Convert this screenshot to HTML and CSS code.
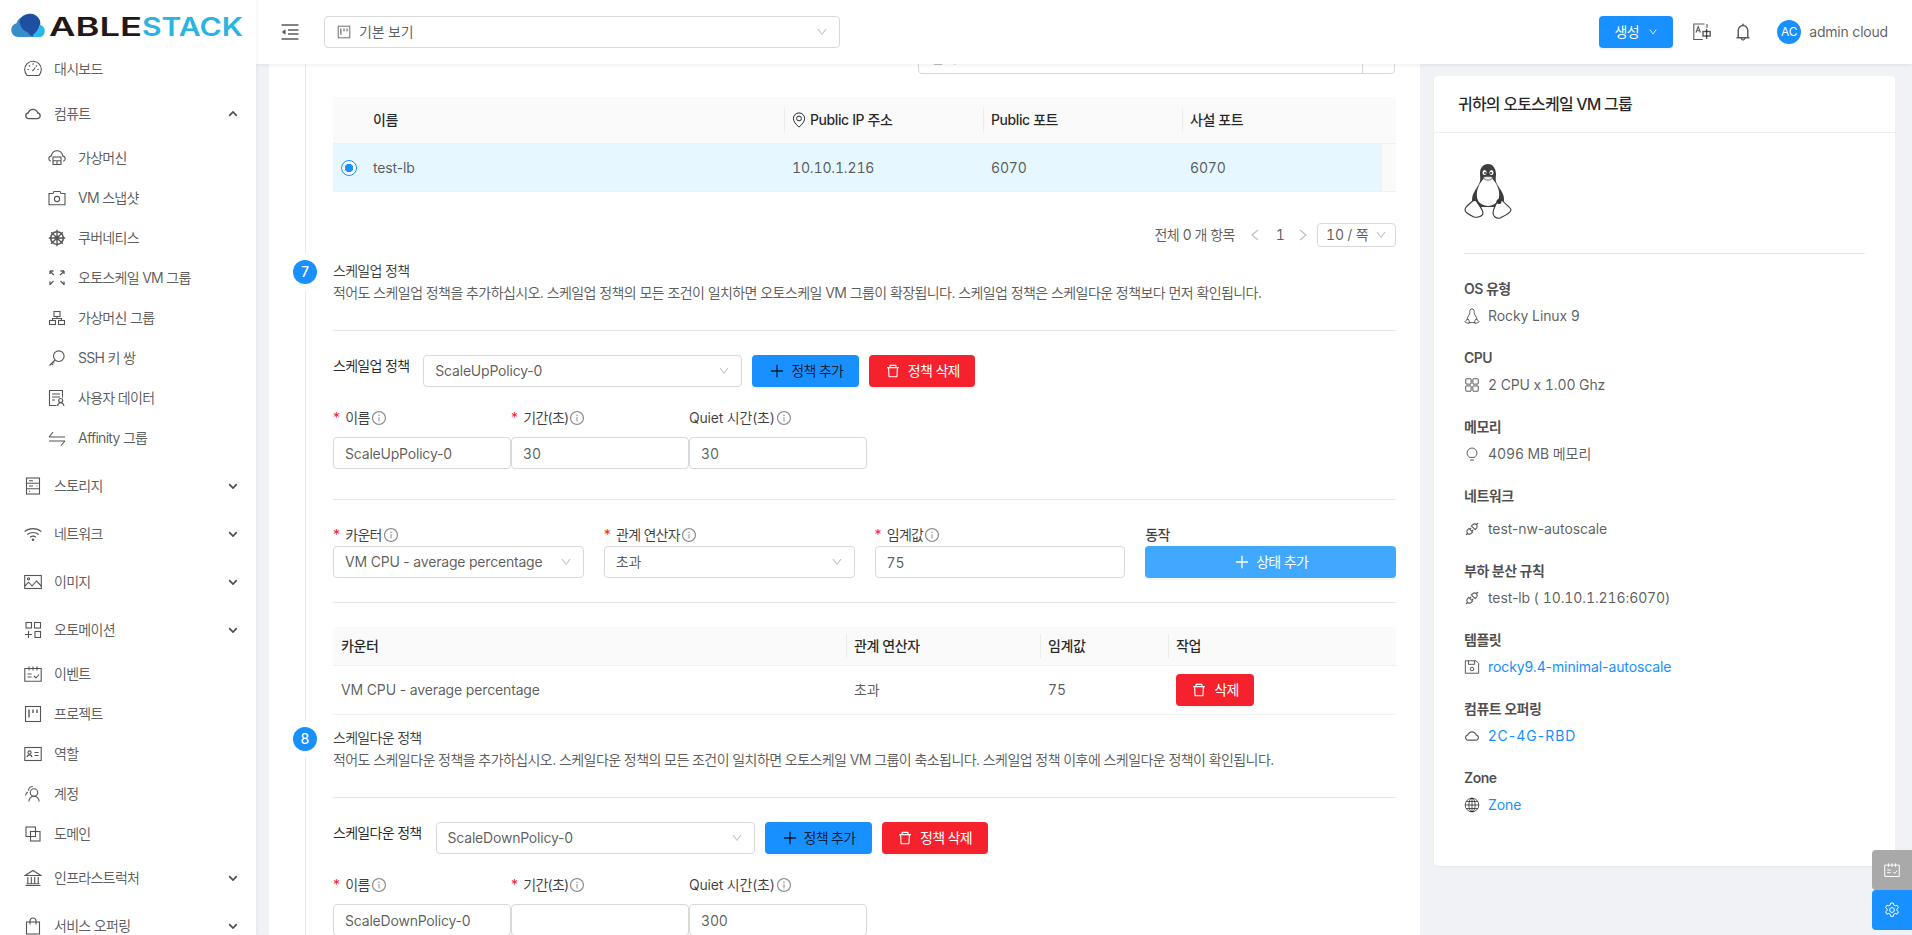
FILE: index.html
```html
<!DOCTYPE html>
<html lang="ko">
  <head>
    <meta charset="utf-8" />
    <title>ABLESTACK</title>
    <link rel="stylesheet" href="styles.css">
  </head>
  <body>
    <svg class="sprite">
      <symbol id="i-down" viewBox="0 0 1024 1024"><path fill="currentColor" stroke="none" d="M884 256h-75c-5.1 0-9.9 2.5-12.9 6.6L512 654.2 227.9 262.6c-3-4.1-7.8-6.6-12.9-6.6h-75c-6.5 0-10.3 7.4-6.5 12.7l352.6 486.1c12.8 17.6 39 17.6 51.7 0l352.6-486.1c3.9-5.3.1-12.7-6.4-12.7z"/></symbol>
      <symbol id="i-chev" viewBox="0 0 10 10"><path d="M1.200 3.200L5 7l3.800-3.800"/></symbol>
      <symbol id="i-left" viewBox="0 0 10 12"><path d="M8 1L2 6l6 5"/></symbol>
      <symbol id="i-right" viewBox="0 0 10 12"><path d="M2 1l6 5-6 5"/></symbol>
      <symbol id="i-plus" viewBox="0 0 1024 1024"><path fill="currentColor" stroke="none" d="M482 152h60q8 0 8 8v704q0 8-8 8h-60q-8 0-8-8V160q0-8 8-8z"/><path fill="currentColor" stroke="none" d="M176 474h672q8 0 8 8v60q0 8-8 8H176q-8 0-8-8v-60q0-8 8-8z"/></symbol>
      <symbol id="i-delete" viewBox="0 0 1024 1024"><path fill="currentColor" stroke="none" d="M360 184h-8c4.400 0 8-3.600 8-8v8h304v-8c0 4.400 3.600 8 8 8h-8v72h72v-80c0-35.300-28.700-64-64-64H352c-35.300 0-64 28.700-64 64v80h72v-72zm504 72H160c-17.700 0-32 14.300-32 32v32c0 4.400 3.600 8 8 8h60.400l24.700 523c1.600 34.100 29.800 61 63.900 61h454c34.200 0 62.300-26.800 63.900-61l24.700-523H888c4.400 0 8-3.600 8-8v-32c0-17.700-14.300-32-32-32zM731.300 840H292.700l-24.200-512h487l-24.200 512z"/></symbol>
      <symbol id="i-cloud" viewBox="0 0 1024 1024"><path fill="currentColor" stroke="none" d="M811.4 418.7C765.6 297.9 648.9 212 512.2 212S258.8 297.8 213 418.6C127.3 441.1 64 519.1 64 612c0 110.5 89.5 200 199.9 200h496.2C870.5 812 960 722.5 960 612c0-92.7-63.1-170.7-148.6-193.3zm36.3 281a123.07 123.07 0 0 1-87.6 36.3H263.9c-33.1 0-64.2-12.9-87.6-36.3A123.3 123.3 0 0 1 140 612c0-28 9.1-54.3 26.2-76.3a125.7 125.7 0 0 1 66.1-43.7l37.9-9.9 13.9-36.6c8.6-22.8 20.6-44.1 35.7-63.4a245.6 245.6 0 0 1 52.4-49.9c41.1-28.9 89.5-44.2 140-44.2s98.9 15.3 140 44.2c19.9 14 37.5 30.8 52.4 49.9 15.1 19.3 27.1 40.7 35.7 63.4l13.8 36.5 37.8 10c54.3 14.5 92.1 63.8 92.1 120 0 33.1-12.9 64.3-36.3 87.7z"/></symbol>
      <symbol id="i-bell" viewBox="0 0 1024 1024"><path fill="currentColor" stroke="none" d="M816 768h-24V428c0-141.1-104.3-257.7-240-277.1V112c0-22.1-17.9-40-40-40s-40 17.9-40 40v38.9c-135.7 19.4-240 136-240 277.1v340h-24c-17.7 0-32 14.3-32 32v32c0 4.4 3.6 8 8 8h216c0 61.8 50.2 112 112 112s112-50.2 112-112h216c4.4 0 8-3.6 8-8v-32c0-17.7-14.3-32-32-32zM512 888c-26.5 0-48-21.5-48-48h96c0 26.5-21.5 48-48 48zM304 768V428c0-55.6 21.6-107.8 60.9-147.1S456.4 220 512 220c55.6 0 107.8 21.6 147.1 60.9S720 372.4 720 428v340H304z"/></symbol>
      <symbol id="i-info" viewBox="0 0 1024 1024"><path fill="currentColor" stroke="none" d="M512 64C264.6 64 64 264.6 64 512s200.6 448 448 448 448-200.6 448-448S759.4 64 512 64zm0 820c-205.4 0-372-166.6-372-372s166.6-372 372-372 372 166.6 372 372-166.6 372-372 372z"/><path fill="currentColor" stroke="none" d="M464 336a48 48 0 1 0 96 0 48 48 0 1 0-96 0zm72 112h-48c-4.4 0-8 3.6-8 8v272c0 4.4 3.6 8 8 8h48c4.4 0 8-3.6 8-8V456c0-4.4-3.6-8-8-8z"/></symbol>
      <symbol id="i-api" viewBox="0 0 1024 1024"><path fill="currentColor" stroke="none" d="M917.7 148.8l-42.4-42.4c-1.6-1.6-3.6-2.3-5.7-2.3s-4.1.8-5.7 2.3l-76.1 76.1a199.27 199.27 0 0 0-112.1-34.3c-51.2 0-102.4 19.5-141.5 58.6L432.3 308.7a8.03 8.03 0 0 0 0 11.3L704 591.7c1.6 1.6 3.6 2.3 5.7 2.3 2 0 4.1-.8 5.7-2.3l101.9-101.9c68.9-69 77-175.7 24.3-253.5l76.1-76.1c3.1-3.2 3.1-8.3 0-11.4zM769.1 441.7l-59.4 59.4-186.8-186.8 59.4-59.4c24.9-24.9 58.1-38.7 93.4-38.7 35.3 0 68.4 13.7 93.4 38.7 24.9 24.9 38.7 58.1 38.7 93.4 0 35.3-13.8 68.4-38.7 93.4zm-190.2 105a8.03 8.03 0 0 0-11.3 0L501 613.3 410.7 523l66.7-66.7c3.1-3.1 3.1-8.2 0-11.3L441 408.6a8.03 8.03 0 0 0-11.3 0L363 475.3l-43-43a7.85 7.85 0 0 0-5.7-2.3c-2 0-4.1.8-5.7 2.3L206.8 534.2c-68.9 69-77 175.7-24.3 253.5l-76.1 76.1a8.03 8.03 0 0 0 0 11.3l42.4 42.4c1.6 1.6 3.6 2.3 5.7 2.3s4.1-.8 5.7-2.3l76.1-76.1c33.7 22.9 72.9 34.3 112.1 34.3 51.2 0 102.4-19.5 141.5-58.6l101.9-101.9c3.1-3.1 3.1-8.2 0-11.3l-43-43 66.7-66.7c3.1-3.1 3.1-8.2 0-11.3l-36.6-36.2zM441.7 769.1a131.32 131.32 0 0 1-93.4 38.7c-35.3 0-68.4-13.7-93.4-38.7a131.32 131.32 0 0 1-38.7-93.4c0-35.3 13.7-68.4 38.7-93.4l59.4-59.4 186.8 186.8-59.4 59.4z"/></symbol>

      <symbol id="i-dash" viewBox="0 0 18 18"><path d="M3 15.500h12c1.300-1.600 2.300-3.600 2.300-6A8.300 8.300 0 0 0 .7 9.500c0 2.400 1 4.400 2.300 6z"/><path d="M9 3.200v1.500M3.300 9.500h1.500M13.200 9.500h1.500M5 5.500l1 1M13 5.500l-1 1M8.400 11.200l3-3.700"/></symbol>
      <symbol id="i-vm" viewBox="0 0 18 18"><path d="M2.800 12.300C1.600 11.800.8 10.800.8 9.700c0-1.300 1-2.400 2.500-2.800C3.900 3.800 6.200 1.800 9 1.800s5.100 2 5.700 5.100c1.500.4 2.500 1.500 2.500 2.800 0 1.100-.8 2.100-2 2.600"/><rect x="5" y="8" width="8" height="7.500"/><path d="M5 11.700h8M9 11.700v3.800"/></symbol>
      <symbol id="i-camera" viewBox="0 0 18 18"><path d="M1 4.500h4l1-2h6l1 2h4v11.300H1z"/><circle cx="9" cy="10" r="2.600"/></symbol>
      <symbol id="i-wheel" viewBox="0 0 18 18"><circle cx="9" cy="9" r="6.300" stroke-width="1.600"/><circle cx="9" cy="9" r="1.800" stroke-width="1.300"/><path d="M9 .8v16.400M.8 9h16.400M3.200 3.200l11.600 11.600M14.800 3.200L3.200 14.800" stroke-width="1.300"/></symbol>
      <symbol id="i-expand" viewBox="0 0 18 18"><path d="M2 2.500l4 3.500M16 2.500l-4 3.500M2 15.500l3.500-3.500M16 15.500L12.500 12"/><path d="M2 2h3.500M16 2h-3.500M2 2v3M16 2v3M2 16v-3.500M16 16v-3.500" stroke-width="1.300"/></symbol>
      <symbol id="i-cluster" viewBox="0 0 18 18"><rect x="6" y="2.500" width="6" height="5"/><rect x="1.500" y="11.500" width="6" height="4"/><rect x="10.500" y="11.500" width="6" height="4"/><path d="M4.500 11.500V9.500h9v2M9 7.500v2"/></symbol>
      <symbol id="i-key" viewBox="0 0 18 18"><circle cx="10.800" cy="7.200" r="5.300"/><path d="M7 11L1.500 16.500M3.500 14.500l1.700 1.500M5 13l1.200 1.200"/></symbol>
      <symbol id="i-doc" viewBox="0 0 18 18"><path d="M8.500 16.500H1.500V1.500h13v7"/><path d="M4 5h8M4 8h8M4 11h3"/><circle cx="12.700" cy="11.500" r="2"/><path d="M9.500 17c.3-2 1.500-3.200 3.200-3.200s2.900 1.200 3.200 3.200"/></symbol>
      <symbol id="i-swap" viewBox="0 0 18 18"><path d="M1 8h16M1 8l4-5"/><path d="M17 12H1M17 12l-4 4.500"/></symbol>
      <symbol id="i-db" viewBox="0 0 18 18"><rect x="2.500" y="1" width="13" height="16"/><path d="M2.500 6.300h13M2.500 11.700h13M5 3.700h4M5 9h4M5 14.400h.8M12.500 9h.8"/></symbol>
      <symbol id="i-wifi" viewBox="0 0 18 18"><path d="M.6 6.600c4.700-4 12.100-4 16.800 0M3.300 9.500c3.200-2.700 8.200-2.700 11.400 0M6 12.300c1.700-1.400 4.300-1.400 6 0"/><circle cx="9" cy="14.800" r=".7"/></symbol>
      <symbol id="i-picture" viewBox="0 0 18 18"><rect x=".7" y="2.500" width="16.600" height="13"/><circle cx="4.500" cy="5.800" r="1.100"/><path d="M.7 13l4-3.800 3.300 3.800 4.500-5 4.800 5"/></symbol>
      <symbol id="i-apps" viewBox="0 0 18 18"><rect x="2" y="1.500" width="5.500" height="5.500"/><rect x="10.500" y="1.500" width="6" height="5.500"/><rect x="11" y="10.500" width="5.500" height="6"/><path d="M1 13.500h7M4.500 10v7"/></symbol>
      <symbol id="i-schedule" viewBox="0 0 18 18"><path d="M.8 3.500h16.400v12.800H.8z"/><path d="M5 1.500v4M9 1.500v4M13 1.500v4M3.500 9h4M3.500 12h4M10 11l2 2 3-3.500"/></symbol>
      <symbol id="i-project" viewBox="0 0 18 18"><rect x="1.500" y="1.500" width="15" height="15"/><path d="M5 4.500v8M9 4.500v3.500M13 4.500v3.500" stroke-width="1.400"/></symbol>
      <symbol id="i-idcard" viewBox="0 0 18 18"><rect x=".8" y="2.500" width="16.400" height="13"/><circle cx="5.500" cy="7.500" r="1.600"/><path d="M3 12.200c.2-1.500 1.200-2.300 2.500-2.300s2.300.8 2.500 2.300M10.500 7.500h4M10.500 10.500h4"/></symbol>
      <symbol id="i-team" viewBox="0 0 18 18"><circle cx="10" cy="7.500" r="3.700"/><path d="M4.800 16.500c.4-3.200 2.400-5.300 5.200-5.300s4.800 2.100 5.200 5.300"/><path d="M4.500 5.800C4.500 3.300 6.500 1.500 8.800 1.500M1.500 10.500c.3-1.500 1-2.800 2.200-3.500"/></symbol>
      <symbol id="i-block" viewBox="0 0 18 18"><rect x="2" y="2" width="9.500" height="9.500"/><rect x="6.500" y="6.500" width="9.500" height="9.500"/></symbol>
      <symbol id="i-bank" viewBox="0 0 18 18"><path d="M1 6.500L9 1.500l8 5zM1.500 16.500h15M2.500 14.800h13"/><path d="M3.800 8v6.800M7.300 8v6.800M10.700 8v6.800M14.200 8v6.800"/></symbol>
      <symbol id="i-bag" viewBox="0 0 18 18"><rect x="2.500" y="5" width="13" height="12"/><path d="M6 7.500V4a3 3 0 0 1 6 0v3.500"/></symbol>
      <symbol id="i-fold" viewBox="0 0 18 18"><path d="M.5 2h17M7 7h10.500M7 11h10.500M.5 16h17" stroke-width="1.500"/><path d="M4.500 6.200v5.600L.8 9z" fill="currentColor" stroke="none"/></symbol>
      <symbol id="i-translate" viewBox="0 0 18 18"><path d="M11.500 1H.8v15.500h9M14 1v4"/><path d="M3 9.500l2.200-6 2.200 6M3.800 7.800h2.800"/><rect x="10" y="8.500" width="7.200" height="4.500" stroke-width="1.400"/><path d="M13.600 6v10" stroke-width="1.400"/></symbol>
      <symbol id="i-pin" viewBox="0 0 18 18"><path d="M9 17C5 13.500 2.700 10.300 2.700 7.300a6.300 6.300 0 0 1 12.600 0c0 3-2.300 6.200-6.300 9.700z"/><circle cx="9" cy="7.300" r="2.700"/></symbol>
      <symbol id="i-grid" viewBox="0 0 18 18"><rect x="2" y="2" width="6" height="6" rx=".5"/><rect x="10" y="2" width="6" height="6" rx=".5"/><rect x="2" y="10" width="6" height="6" rx=".5"/><rect x="10" y="10" width="6" height="6" rx=".5"/></symbol>
      <symbol id="i-bulb" viewBox="0 0 18 18"><path d="M6.500 12.800C4.500 11.600 3.500 9.800 3.500 7.800a5.500 5.500 0 0 1 11 0c0 2-1 3.800-3 5zM6.700 15.800h4.600"/></symbol>
      <symbol id="i-save" viewBox="0 0 18 18"><path d="M1.500 2h12l3 3v11h-15z"/><path d="M5 2v4h7V2"/><circle cx="9" cy="11.300" r="2"/></symbol>
      <symbol id="i-globe" viewBox="0 0 18 18"><circle cx="9" cy="9" r="7.700"/><ellipse cx="9" cy="9" rx="3.500" ry="7.700"/><path d="M1.300 9h15.400M2.500 5h13M2.500 13h13M9 1.300v15.400"/></symbol>
      <symbol id="i-gear" viewBox="0 0 18 18"><path d="M7.500 1.200h3l.5 2.300 1.500.9 2.200-.8 1.500 2.600-1.700 1.600v1.700l1.700 1.600-1.500 2.600-2.200-.8-1.500.9-.5 2.300h-3l-.5-2.300-1.500-.9-2.200.8-1.500-2.600 1.700-1.600V7.800L1.800 6.200l1.500-2.600 2.200.8 1.500-.9z"/><circle cx="9" cy="9" r="2.700"/></symbol>
      <symbol id="i-search" viewBox="0 0 18 18"><circle cx="8" cy="8" r="5.500"/><path d="M12 12l4.500 4.500"/></symbol>
      <symbol id="i-tux" viewBox="0 0 48 56">
        <path fill="#3d3d3d" stroke="none" d="M24 1c-5 0-8 4-8 9 0 5 1 7-1 11-2 4-7 9-7 16 0 3 1 6 3 7h26c2-2 3-5 3-8 0-6-5-11-7-15-2-3-1-7-1-10 0-5-3-10-8-10z"/>
        <path fill="#fff" stroke="none" d="M24 14c-5 0-10 8-11 15-1 8 2 13 11 14 9-1 12-6 11-14-1-7-6-15-11-15z"/>
        <ellipse cx="20.500" cy="9.500" rx="2" ry="2.600" fill="#fff" stroke="none"/>
        <ellipse cx="27.500" cy="9.500" rx="2" ry="2.600" fill="#fff" stroke="none"/>
        <circle cx="21" cy="10" r="1" fill="#333" stroke="none"/>
        <circle cx="27" cy="10" r="1" fill="#333" stroke="none"/>
        <path fill="#eee" stroke="#555" stroke-width=".8" d="M19 14.500c2-1.500 8-1.500 10 0-2 3.500-8 3.500-10 0z"/>
        <path fill="#fff" stroke="#333" stroke-width="1.100" d="M7.500 39C4 42 1 44 1 47c0 3 5 5 9 7 4 1 9-1 9-4 0-3-4-8-6-11-1-2-3-2-5.500 0z"/>
        <path fill="#fff" stroke="#333" stroke-width="1.100" d="M39 38c2 3 8 7 8 9 0 3-7 6-11 8-4 1-7-2-7-5 0-3 2-7 4-11 1-2 4-3 6-1z"/>
        <circle cx="35" cy="38.500" r="2.500" fill="#333" stroke="none"/>
      </symbol>
      <symbol id="i-tux-line" viewBox="0 0 18 18">
        <path d="M9 1c-1.500 0-2.500 1.200-2.500 2.800 0 1.700.2 2.500-.8 4C4.700 9.300 3.500 11 3.500 13M9 1c1.500 0 2.500 1.200 2.500 2.800 0 1.700-.2 2.500.8 4 1 1.500 2.200 3.200 2.200 5.200"/>
        <path d="M3.500 13c-1 1-2.200 1.700-2.500 2.500 1 1 3 1.700 4.500 1.700.8-1 .5-2.700-.8-4.700zM14.500 13c1 1 2.200 1.700 2.500 2.500-1 1-3 1.700-4.500 1.700-.8-1-.5-2.700.8-4.700zM5.500 16.500h7"/>
      </symbol>
    </svg>

    <div class="app">
      <aside class="sider">
        <div class="logo">
          <svg class="logo-img" viewBox="0 0 256 49">
            <path fill="#3b8ccb" d="M18 37a7 7 0 0 1-1.500-13.800 10 10 0 0 1 8-7L34 37z"/>
            <path fill="#1f4fa3" d="M19.500 21a11 11 0 0 1 20-1.500c1 2 1 4 .5 7l-6 10.500c-3-1-5-2.500-6-4.500-4.500-1.500-8-5.500-8.500-11.500z"/>
            <path fill="#2bb8e9" d="M35 37c-2.500 0-3-1.500-1-3 3-2.500 4.500-5.500 5.500-9.300A6.500 6.500 0 0 1 41 37z"/>
            <text class="logo-able" x="49" y="36" textLength="93" lengthAdjust="spacingAndGlyphs">ABLE</text>
            <text class="logo-stack" x="142" y="36" textLength="101" lengthAdjust="spacingAndGlyphs">STACK</text>
          </svg>
        </div>
        <nav class="menu">
          <a class="menu-item"><svg class="ico"><use href="#i-dash"/></svg><span>대시보드</span></a>
          <a class="menu-head first"><svg class="ico"><use href="#i-cloud"/></svg><span>컴퓨트</span><svg class="caret up"><use href="#i-chev"/></svg></a>
          <div class="menu-sub">
            <a class="menu-item"><svg class="ico"><use href="#i-vm"/></svg><span>가상머신</span></a>
            <a class="menu-item"><svg class="ico"><use href="#i-camera"/></svg><span>VM 스냅샷</span></a>
            <a class="menu-item"><svg class="ico"><use href="#i-wheel"/></svg><span>쿠버네티스</span></a>
            <a class="menu-item"><svg class="ico"><use href="#i-expand"/></svg><span>오토스케일 VM 그룹</span></a>
            <a class="menu-item"><svg class="ico"><use href="#i-cluster"/></svg><span>가상머신 그룹</span></a>
            <a class="menu-item"><svg class="ico"><use href="#i-key"/></svg><span>SSH 키 쌍</span></a>
            <a class="menu-item"><svg class="ico"><use href="#i-doc"/></svg><span>사용자 데이터</span></a>
            <a class="menu-item"><svg class="ico"><use href="#i-swap"/></svg><span>Affinity 그룹</span></a>
          </div>
          <a class="menu-head"><svg class="ico"><use href="#i-db"/></svg><span>스토리지</span><svg class="caret"><use href="#i-chev"/></svg></a>
          <a class="menu-head"><svg class="ico"><use href="#i-wifi"/></svg><span>네트워크</span><svg class="caret"><use href="#i-chev"/></svg></a>
          <a class="menu-head"><svg class="ico"><use href="#i-picture"/></svg><span>이미지</span><svg class="caret"><use href="#i-chev"/></svg></a>
          <a class="menu-head"><svg class="ico"><use href="#i-apps"/></svg><span>오토메이션</span><svg class="caret"><use href="#i-chev"/></svg></a>
          <a class="menu-item"><svg class="ico"><use href="#i-schedule"/></svg><span>이벤트</span></a>
          <a class="menu-item"><svg class="ico"><use href="#i-project"/></svg><span>프로젝트</span></a>
          <a class="menu-item"><svg class="ico"><use href="#i-idcard"/></svg><span>역할</span></a>
          <a class="menu-item"><svg class="ico"><use href="#i-team"/></svg><span>계정</span></a>
          <a class="menu-item"><svg class="ico"><use href="#i-block"/></svg><span>도메인</span></a>
          <a class="menu-head"><svg class="ico"><use href="#i-bank"/></svg><span>인프라스트럭처</span><svg class="caret"><use href="#i-chev"/></svg></a>
          <a class="menu-head"><svg class="ico"><use href="#i-bag"/></svg><span>서비스 오퍼링</span><svg class="caret"><use href="#i-chev"/></svg></a>
        </nav>
      </aside>

      <div class="main">
        <header class="topbar">
          <svg class="fold"><use href="#i-fold"/></svg>
          <div class="select view-select">
            <svg class="view-ico"><use href="#i-project"/></svg>
            <span class="select-text">기본 보기</span>
            <svg class="arrow"><use href="#i-down"/></svg>
          </div>
          <div class="topbar-right">
            <button class="btn btn-create">생성 <svg class="btn-arrow"><use href="#i-down"/></svg></button>
            <svg class="top-ico translate"><use href="#i-translate"/></svg>
            <svg class="top-ico bell"><use href="#i-bell"/></svg>
            <span class="avatar">AC</span>
            <span class="username">admin cloud</span>
          </div>
        </header>

        <div class="content">
          <section class="panel">
            <div class="step-body">
              <div class="search">
                <span class="search-text">검색</span>
                <span class="search-btn"><svg class="search-ico"><use href="#i-search"/></svg></span>
              </div>

              <table class="tbl lb-tbl">
                <colgroup>
                  <col class="c-radio"><col class="c-name"><col class="c-ip"><col class="c-pub"><col class="c-priv"><col class="c-scroll">
                </colgroup>
                <thead>
                  <tr>
                    <th></th>
                    <th>이름</th>
                    <th class="sep"><svg class="th-ico"><use href="#i-pin"/></svg>Public IP 주소</th>
                    <th class="sep">Public 포트</th>
                    <th class="sep" colspan="2">사설 포트</th>
                  </tr>
                </thead>
                <tbody>
                  <tr class="selected">
                    <td><span class="radio"></span></td>
                    <td>test-lb</td>
                    <td class="tnum">10.10.1.216</td>
                    <td class="tnum">6070</td>
                    <td class="tnum">6070</td>
                    <td class="scroll-cell"></td>
                  </tr>
                </tbody>
              </table>

              <div class="pager">
                <span class="pager-total">전체 0 개 항목</span>
                <svg class="pager-nav nav-prev"><use href="#i-left"/></svg>
                <span class="pager-cur tnum">1</span>
                <svg class="pager-nav"><use href="#i-right"/></svg>
                <div class="select pager-size tnum"><span class="select-text">10 / 쪽</span><svg class="arrow"><use href="#i-down"/></svg></div>
              </div>
            </div>

            <div class="step-head">
              <span class="step-num">7</span>
              <div>
                <div class="step-title">스케일업 정책</div>
                <div class="step-desc">적어도 스케일업 정책을 추가하십시오. 스케일업 정책의 모든 조건이 일치하면 오토스케일 VM 그룹이 확장됩니다. 스케일업 정책은 스케일다운 정책보다 먼저 확인됩니다.</div>
              </div>
            </div>

            <div class="step-body">
              <hr class="rule rule-head">
              <div class="policy-row">
                <span class="policy-label">스케일업 정책</span>
                <div class="select policy-select"><span class="select-text">ScaleUpPolicy-0</span><svg class="arrow"><use href="#i-down"/></svg></div>
                <button class="btn btn-add"><svg class="btn-ico ico-plus"><use href="#i-plus"/></svg>정책 추가</button>
                <button class="btn btn-del"><svg class="btn-ico"><use href="#i-delete"/></svg>정책 삭제</button>
              </div>
              <div class="fields-3">
                <div>
                  <label class="lbl"><i class="req">*</i>이름<svg class="info"><use href="#i-info"/></svg></label>
                  <input class="input" type="text" value="ScaleUpPolicy-0">
                </div>
                <div>
                  <label class="lbl"><i class="req">*</i>기간(초)<svg class="info"><use href="#i-info"/></svg></label>
                  <input class="input tnum" type="text" value="30">
                </div>
                <div>
                  <label class="lbl lbl-latin">Quiet 시간(초)<svg class="info"><use href="#i-info"/></svg></label>
                  <input class="input tnum" type="text" value="30">
                </div>
              </div>
              <hr class="rule rule-fields">
              <div class="fields-4">
                <div>
                  <label class="lbl lbl-tight"><i class="req">*</i>카운터<svg class="info"><use href="#i-info"/></svg></label>
                  <div class="select"><span class="select-text">VM CPU - average percentage</span><svg class="arrow"><use href="#i-down"/></svg></div>
                </div>
                <div>
                  <label class="lbl lbl-tight"><i class="req">*</i>관계 연산자<svg class="info"><use href="#i-info"/></svg></label>
                  <div class="select"><span class="select-text">초과</span><svg class="arrow"><use href="#i-down"/></svg></div>
                </div>
                <div>
                  <label class="lbl lbl-tight"><i class="req">*</i>임계값<svg class="info"><use href="#i-info"/></svg></label>
                  <input class="input tnum" type="text" value="75">
                </div>
                <div>
                  <label class="lbl lbl-tight lbl-strong">동작</label>
                  <button class="btn btn-state"><svg class="btn-ico ico-plus"><use href="#i-plus"/></svg>상태 추가</button>
                </div>
              </div>
              <hr class="rule rule-cond">

              <table class="tbl cond-tbl">
                <colgroup>
                  <col class="c-counter"><col class="c-op"><col class="c-val"><col class="c-act">
                </colgroup>
                <thead>
                  <tr>
                    <th>카운터</th>
                    <th class="sep">관계 연산자</th>
                    <th class="sep">임계값</th>
                    <th class="sep">작업</th>
                  </tr>
                </thead>
                <tbody>
                  <tr>
                    <td>VM CPU - average percentage</td>
                    <td>초과</td>
                    <td class="tnum">75</td>
                    <td><button class="btn btn-del btn-del-row"><svg class="btn-ico"><use href="#i-delete"/></svg>삭제</button></td>
                  </tr>
                </tbody>
              </table>
            </div>

            <div class="step-head step-head-8">
              <span class="step-num">8</span>
              <div>
                <div class="step-title">스케일다운 정책</div>
                <div class="step-desc">적어도 스케일다운 정책을 추가하십시오. 스케일다운 정책의 모든 조건이 일치하면 오토스케일 VM 그룹이 축소됩니다. 스케일업 정책 이후에 스케일다운 정책이 확인됩니다.</div>
              </div>
            </div>

            <div class="step-body">
              <hr class="rule rule-head">
              <div class="policy-row">
                <span class="policy-label">스케일다운 정책</span>
                <div class="select policy-select"><span class="select-text">ScaleDownPolicy-0</span><svg class="arrow"><use href="#i-down"/></svg></div>
                <button class="btn btn-add"><svg class="btn-ico ico-plus"><use href="#i-plus"/></svg>정책 추가</button>
                <button class="btn btn-del"><svg class="btn-ico"><use href="#i-delete"/></svg>정책 삭제</button>
              </div>
              <div class="fields-3">
                <div>
                  <label class="lbl"><i class="req">*</i>이름<svg class="info"><use href="#i-info"/></svg></label>
                  <input class="input" type="text" value="ScaleDownPolicy-0">
                </div>
                <div>
                  <label class="lbl"><i class="req">*</i>기간(초)<svg class="info"><use href="#i-info"/></svg></label>
                  <input class="input" type="text" value="">
                </div>
                <div>
                  <label class="lbl lbl-latin">Quiet 시간(초)<svg class="info"><use href="#i-info"/></svg></label>
                  <input class="input tnum" type="text" value="300">
                </div>
              </div>
            </div>
          </section>

          <aside class="card">
            <div class="card-head">귀하의 오토스케일 VM 그룹</div>
            <div class="card-body">
              <svg class="tux-big"><use href="#i-tux"/></svg>
              <hr class="card-rule">
              <div class="info-item">
                <div class="info-title">OS 유형</div>
                <div class="info-value"><svg class="val-ico"><use href="#i-tux-line"/></svg>Rocky Linux 9</div>
              </div>
              <div class="info-item">
                <div class="info-title">CPU</div>
                <div class="info-value tnum"><svg class="val-ico"><use href="#i-grid"/></svg>2 CPU x 1.00 Ghz</div>
              </div>
              <div class="info-item">
                <div class="info-title">메모리</div>
                <div class="info-value tnum"><svg class="val-ico"><use href="#i-bulb"/></svg>4096 MB 메모리</div>
              </div>
              <div class="info-item info-net">
                <div class="info-title">네트워크</div>
                <div class="info-value"><svg class="val-ico"><use href="#i-api"/></svg>test-nw-autoscale</div>
              </div>
              <div class="info-item">
                <div class="info-title">부하 분산 규칙</div>
                <div class="info-value"><svg class="val-ico"><use href="#i-api"/></svg><span>test-lb ( <span class="tnum">10.10.1.216:6070</span>)</span></div>
              </div>
              <div class="info-item">
                <div class="info-title">템플릿</div>
                <div class="info-value"><svg class="val-ico"><use href="#i-save"/></svg><a class="link">rocky9.4-minimal-autoscale</a></div>
              </div>
              <div class="info-item">
                <div class="info-title">컴퓨트 오퍼링</div>
                <div class="info-value"><svg class="val-ico"><use href="#i-cloud"/></svg><a class="link link-code">2C-4G-RBD</a></div>
              </div>
              <div class="info-item">
                <div class="info-title">Zone</div>
                <div class="info-value"><svg class="val-ico"><use href="#i-globe"/></svg><a class="link">Zone</a></div>
              </div>
            </div>
          </aside>
        </div>
      </div>
    </div>

    <div class="float-btns">
      <span class="float-btn float-gray"><svg><use href="#i-schedule"/></svg></span>
      <span class="float-btn float-blue"><svg><use href="#i-gear"/></svg></span>
    </div>
  </body>
</html>
```

FILE: styles.css
```css
html, body {
  height: 100%;
}

body {
  margin: 0;
  overflow: hidden;
  background: #f0f2f5;
  color: rgba(0, 0, 0, 0.65);
  font-family: Inter, "Noto Sans CJK KR", sans-serif;
  font-size: 14px;
  line-height: 22px;
}

.sprite {
  display: none;
}

svg {
  fill: none;
  stroke: currentColor;
  stroke-width: 1.1;
}

.tnum {
  font-variant-numeric: tabular-nums;
}

.app {
  display: flex;
  height: 100vh;
}

/* sidebar */
.sider {
  width: 256px;
  flex: none;
  background: #fff;
  overflow: hidden;
  box-shadow: 1px 0 4px rgba(0, 21, 41, 0.06);
  position: relative;
  z-index: 3;
}

.logo {
  height: 49px;
}

.logo-img {
  display: block;
  width: 256px;
  height: 49px;
  stroke: none;
}

.logo-able, .logo-stack {
  font-family: Inter, sans-serif;
  font-size: 25px;
  font-weight: 600;
}

.logo-able {
  fill: #231815;
}

.logo-stack {
  fill: #2ab4e2;
}

.menu {
  display: flex;
  flex-direction: column;
}

.menu-item, .menu-head {
  display: flex;
  flex: none;
  align-items: center;
  height: 40px;
  padding-left: 24px;
  letter-spacing: -0.7px;
}

.menu-head {
  margin: 4px 0;
}

.menu-head.first {
  margin-top: 5px;
}

.menu-sub {
  margin-bottom: 4px;
}

.menu-sub .menu-item {
  padding-left: 48px;
}

.ico {
  width: 18px;
  height: 18px;
  margin-right: 12px;
  flex: none;
  color: #555;
}

.caret {
  width: 10px;
  height: 10px;
  margin-left: auto;
  margin-right: 18px;
  color: rgba(0, 0, 0, 0.7);
  stroke-width: 1.7;
}

.caret.up {
  transform: rotate(180deg);
}

/* header */
.main {
  flex: 1;
  min-width: 0;
  display: flex;
  flex-direction: column;
}

.topbar {
  height: 64px;
  flex: none;
  display: flex;
  align-items: center;
  background: #fff;
  box-shadow: 0 1px 4px rgba(0, 21, 41, 0.08);
  position: relative;
  z-index: 2;
  padding: 0 24px 0 25px;
}

.fold {
  width: 18px;
  height: 18px;
  margin-right: 25px;
}

.select {
  display: flex;
  align-items: center;
  height: 32px;
  box-sizing: border-box;
  padding: 0 11px;
  border: 1px solid #d9d9d9;
  border-radius: 4px;
  background: #fff;
  letter-spacing: -0.2px;
}

.select-text {
  flex: 1;
  white-space: nowrap;
}

.arrow {
  width: 12px;
  height: 12px;
  color: #bfbfbf;
  flex: none;
}

.view-select {
  width: 516px;
  padding-left: 12px;
}

.view-ico {
  width: 14px;
  height: 14px;
  margin-right: 8px;
}

.topbar-right {
  margin-left: auto;
  display: flex;
  align-items: center;
}

.btn {
  display: inline-flex;
  align-items: center;
  justify-content: center;
  height: 32px;
  box-sizing: border-box;
  border: 0;
  border-radius: 4px;
  font: inherit;
  letter-spacing: -0.7px;
  box-shadow: 0 2px 0 rgba(0, 0, 0, 0.04);
}

.btn-create {
  width: 74px;
  background: #1890ff;
  color: #fff;
}

.btn-arrow {
  width: 10px;
  height: 10px;
  margin-left: 9px;
}

.top-ico {
  width: 18px;
  height: 18px;
}

.translate {
  margin-left: 20px;
}

.bell {
  width: 20px;
  height: 20px;
  margin-left: 22px;
}

.avatar {
  width: 24px;
  height: 24px;
  margin-left: 24px;
  border-radius: 50%;
  background: #1890ff;
  color: #fff;
  font-size: 12px;
  line-height: 24px;
  text-align: center;
}

.username {
  margin-left: 8px;
  letter-spacing: -0.2px;
}

/* content */
.content {
  flex: 1;
  min-height: 0;
  display: flex;
  gap: 14px;
  padding: 0 17px 0 13px;
  overflow: hidden;
}

.panel {
  width: 1151px;
  flex: none;
  box-sizing: border-box;
  padding: 0 24px;
  background: #fff;
  position: relative;
}

.panel::before {
  content: "";
  position: absolute;
  left: 36px;
  top: 0;
  bottom: 0;
  width: 1px;
  background: #e8e8e8;
}

.step-body {
  margin-left: 40px;
}

.search {
  display: flex;
  width: 477px;
  height: 32px;
  margin-top: -22px;
  margin-left: 585px;
  box-sizing: border-box;
  border: 1px solid #d9d9d9;
  border-radius: 4px;
  align-items: center;
}

.search-text {
  flex: 1;
  padding-left: 12px;
  color: #bfbfbf;
}

.search-btn {
  display: flex;
  align-items: center;
  justify-content: center;
  width: 31px;
  height: 100%;
  border-left: 1px solid #d9d9d9;
}

.search-ico {
  width: 14px;
  height: 14px;
  color: #666;
}

.tbl {
  width: 1063px;
  table-layout: fixed;
  border-collapse: collapse;
}

.lb-tbl {
  margin-top: 23px;
}

.tbl th {
  padding: 0 8px;
  background: #fafafa;
  color: rgba(0, 0, 0, 0.85);
  font-weight: 500;
  text-align: left;
  border-bottom: 1px solid #f0f0f0;
  position: relative;
  letter-spacing: -0.4px;
}

.tbl td {
  padding: 0 8px;
  border-bottom: 1px solid #f0f0f0;
  letter-spacing: -0.15px;
}

.sep::before {
  content: "";
  position: absolute;
  left: 0;
  top: 50%;
  height: 24px;
  margin-top: -12px;
  width: 1px;
  background: #ececec;
}

.c-radio { width: 32px; }
.c-name { width: 419px; }
.c-ip { width: 199px; }
.c-pub { width: 199px; }
.c-priv { width: 199px; }
.c-scroll { width: 15px; }

.lb-tbl th {
  height: 46px;
}

.lb-tbl td {
  height: 47px;
}

.selected td {
  background: #e6f7ff;
}

.tbl td.scroll-cell {
  padding: 0;
  background: #fafafa;
  border-left: 1px solid #f0f0f0;
}

.radio {
  display: block;
  width: 16px;
  height: 16px;
  box-sizing: border-box;
  border: 1px solid #1890ff;
  border-radius: 50%;
  background: radial-gradient(circle, #1890ff 0 4px, #fff 4.5px);
}

.th-ico {
  width: 16px;
  height: 16px;
  margin-left: -1px;
  margin-right: 3px;
  vertical-align: -3px;
}

.pager {
  display: flex;
  align-items: center;
  justify-content: flex-end;
  height: 24px;
  margin-top: 31px;
  letter-spacing: -0.5px;
}

.pager-total {
  margin-right: 14px;
}

.pager-nav {
  width: 12px;
  height: 12px;
  color: #bfbfbf;
}

.nav-prev {
  margin-right: 2px;
}

.pager-cur {
  width: 34px;
  text-align: center;
}

.pager-size {
  width: 79px;
  height: 24px;
  margin-left: 8px;
  padding: 0 8px;
}

.step-head {
  display: flex;
  gap: 16px;
  margin-top: 13px;
  position: relative;
}

.step-head-8 {
  margin-top: 12px;
}

.step-num {
  width: 24px;
  height: 24px;
  flex: none;
  border-radius: 50%;
  background: #1890ff;
  color: #fff;
  font-weight: 500;
  line-height: 24px;
  text-align: center;
  box-shadow: 0 0 0 6px #fff;
}

.step-title {
  color: rgba(0, 0, 0, 0.75);
  letter-spacing: -0.7px;
}

.step-desc {
  letter-spacing: -0.58px;
  white-space: nowrap;
}

.rule {
  height: 1px;
  margin: 0;
  border: 0;
  background: #e8e8e8;
}

.rule-head {
  margin-top: 26px;
}

.policy-row {
  display: flex;
  align-items: flex-start;
  gap: 10px;
  margin-top: 24px;
}

.policy-label {
  margin-right: 4px;
  color: rgba(0, 0, 0, 0.85);
  letter-spacing: -0.7px;
}

.policy-select {
  width: 319px;
}

.btn-add {
  width: 107px;
  background: #1890ff;
  color: rgba(0, 0, 0, 0.8);
}

.btn-del {
  width: 106px;
  background: #f5222d;
  color: #fff;
}

.btn-ico {
  width: 16px;
  height: 16px;
  margin-right: 7px;
}

.ico-plus {
  width: 18px;
  height: 18px;
  margin-right: 5px;
}

.fields-3 {
  display: grid;
  grid-template-columns: 178px 178px 178px;
  margin-top: 20px;
}

.lbl {
  display: block;
  margin-bottom: 8px;
  color: rgba(0, 0, 0, 0.75);
  letter-spacing: -0.75px;
}

.lbl-tight {
  margin-bottom: 0;
}

.lbl-latin {
  letter-spacing: -0.2px;
}

.lbl-strong {
  font-weight: 500;
}

.req {
  margin-right: 6px;
  color: #f5222d;
  font-style: normal;
}

.info {
  width: 16px;
  height: 16px;
  margin-left: 1px;
  color: rgba(0, 0, 0, 0.45);
  vertical-align: -3px;
}

.input {
  display: block;
  width: 100%;
  height: 32px;
  box-sizing: border-box;
  padding: 0 11px;
  border: 1px solid #d9d9d9;
  border-radius: 4px;
  background: #fff;
  color: rgba(0, 0, 0, 0.65);
  font: inherit;
  letter-spacing: -0.2px;
}

.input.tnum {
  font-variant-numeric: tabular-nums;
}

.rule-fields {
  margin-top: 30px;
}

.fields-4 {
  display: grid;
  grid-template-columns: repeat(4, 1fr);
  gap: 20px;
  margin-top: 24px;
}

.btn-state {
  width: 100%;
  background: #40a9ff;
  color: #fff;
}

.rule-cond {
  margin-top: 24px;
}

.cond-tbl {
  margin-top: 24px;
}

.c-counter { width: 513px; }
.c-op { width: 194px; }
.c-val { width: 128px; }
.c-act { width: 228px; }

.cond-tbl th {
  height: 38px;
}

.cond-tbl th:first-child {
  border-top-left-radius: 4px;
}

.cond-tbl td {
  height: 48px;
}

.btn-del-row {
  width: 78px;
  display: flex;
}

/* right card */
.card {
  width: 461px;
  height: 790px;
  flex: none;
  margin-top: 12px;
  border-radius: 4px;
  background: #fff;
  box-shadow: 0 1px 2px rgba(0, 0, 0, 0.05);
}

.card-head {
  height: 56px;
  padding: 0 24px;
  border-bottom: 1px solid #eee;
  color: rgba(0, 0, 0, 0.85);
  font-size: 16px;
  font-weight: 500;
  letter-spacing: -0.8px;
  line-height: 56px;
}

.card-body {
  padding: 30px 30px 0;
}

.tux-big {
  display: block;
  width: 48px;
  height: 56px;
  stroke: none;
}

.card-rule {
  height: 1px;
  margin: 34px 0 0;
  border: 0;
  background: #e8e8e8;
}

.info-item {
  margin-top: 24px;
}

.info-item + .info-item {
  margin-top: 20px;
}

.info-title {
  color: rgba(0, 0, 0, 0.7);
  font-weight: 600;
  letter-spacing: -0.5px;
}

.info-value {
  display: flex;
  align-items: center;
  margin-top: 5px;
  letter-spacing: -0.1px;
}

.info-net .info-value {
  margin-top: 11px;
}

.val-ico {
  width: 16px;
  height: 16px;
  margin-right: 8px;
  flex: none;
}

.link {
  color: #1890ff;
}

.link-code {
  letter-spacing: 1px;
}

/* floating buttons */
.float-btns {
  position: fixed;
  right: 0;
  top: 850px;
  display: flex;
  flex-direction: column;
  z-index: 4;
}

.float-btn {
  display: flex;
  align-items: center;
  justify-content: center;
  width: 40px;
  height: 40px;
  border-radius: 4px 0 0 4px;
  color: #fff;
}

.float-btn svg {
  width: 16px;
  height: 16px;
}

.float-gray {
  background: #a9a9a9;
}

.float-blue {
  background: #1890ff;
}
```
